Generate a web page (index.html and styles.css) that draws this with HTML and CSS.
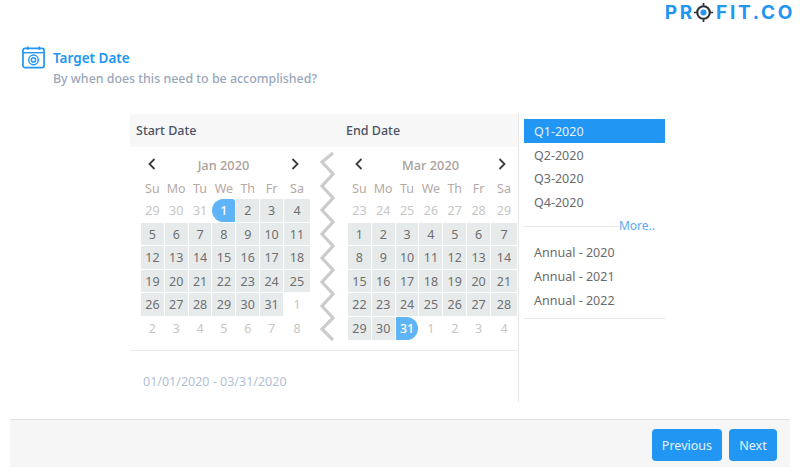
FILE: index.html
```html
<!DOCTYPE html>
<html>
<head>
  <meta charset="UTF-8">
  <title>Target Date</title>
  <link rel="stylesheet" href="styles.css">
</head>
<body>
  <div class="topbar">
    <div class="logo">
      <span>PR</span>
      <svg class="logo-o" viewBox="0 0 20 20" fill="none">
        <circle cx="10" cy="10" r="6.6" stroke="#2b2f36" stroke-width="2.2"/>
        <circle cx="10" cy="10" r="3.2" fill="#2196f3"/>
        <path d="M10 0v3M10 17v3M0 10h3M17 10h3" stroke="#2b2f36" stroke-width="1.8"/>
      </svg>
      <span>FIT.CO</span>
    </div>
  </div>

  <div class="heading">
    <svg class="heading-icon" viewBox="0 0 24 24" fill="none" stroke="#2196f3">
      <rect x="1" y="3" width="22" height="20" rx="2" stroke-width="1.8"/>
      <path d="M1 7.5h22" stroke-width="1.5"/>
      <path d="M6 1v3.5M18 1v3.5" stroke-width="1.8"/>
      <circle cx="12" cy="15" r="5" stroke-width="1.5"/>
      <circle cx="12" cy="15" r="2.2" stroke-width="1.5"/>
    </svg>
    <div>
      <h1 class="title">Target Date</h1>
      <p class="subtitle">By when does this need to be accomplished?</p>
    </div>
  </div>

  <div class="planner">
    <div class="range">
      <div class="range-head">
        <div class="range-label">Start Date</div>
        <div class="range-label">End Date</div>
      </div>
      <div class="calendars">
        <div class="calendar">
          <div class="month-nav">
            <svg class="chevron" viewBox="0 0 8 12"><path d="M6.5 1 1.5 6l5 5"/></svg>
            <span class="month-name">Jan 2020</span>
            <svg class="chevron" viewBox="0 0 8 12"><path d="M1.5 1l5 5-5 5"/></svg>
          </div>
          <div class="days">
            <div class="wd">Su</div><div class="wd">Mo</div><div class="wd">Tu</div><div class="wd">We</div><div class="wd">Th</div><div class="wd">Fr</div><div class="wd">Sa</div>
            <div class="day off">29</div><div class="day off">30</div><div class="day off">31</div><div class="day start">1</div><div class="day on">2</div><div class="day on">3</div><div class="day on">4</div>
            <div class="day on">5</div><div class="day on">6</div><div class="day on">7</div><div class="day on">8</div><div class="day on">9</div><div class="day on">10</div><div class="day on">11</div>
            <div class="day on">12</div><div class="day on">13</div><div class="day on">14</div><div class="day on">15</div><div class="day on">16</div><div class="day on">17</div><div class="day on">18</div>
            <div class="day on">19</div><div class="day on">20</div><div class="day on">21</div><div class="day on">22</div><div class="day on">23</div><div class="day on">24</div><div class="day on">25</div>
            <div class="day on">26</div><div class="day on">27</div><div class="day on">28</div><div class="day on">29</div><div class="day on">30</div><div class="day on">31</div><div class="day off">1</div>
            <div class="day off">2</div><div class="day off">3</div><div class="day off">4</div><div class="day off">5</div><div class="day off">6</div><div class="day off">7</div><div class="day off">8</div>
          </div>
        </div>

        <svg class="zigzag" viewBox="0 0 16 190" fill="none">
          <path d="M14 1 3 10l11 12L3 34l11 12L3 58l11 12L3 82l11 12L3 106l11 12L3 130l11 12L3 154l11 12L3 177l11 11"/>
        </svg>

        <div class="calendar">
          <div class="month-nav">
            <svg class="chevron" viewBox="0 0 8 12"><path d="M6.5 1 1.5 6l5 5"/></svg>
            <span class="month-name">Mar 2020</span>
            <svg class="chevron" viewBox="0 0 8 12"><path d="M1.5 1l5 5-5 5"/></svg>
          </div>
          <div class="days">
            <div class="wd">Su</div><div class="wd">Mo</div><div class="wd">Tu</div><div class="wd">We</div><div class="wd">Th</div><div class="wd">Fr</div><div class="wd">Sa</div>
            <div class="day off">23</div><div class="day off">24</div><div class="day off">25</div><div class="day off">26</div><div class="day off">27</div><div class="day off">28</div><div class="day off">29</div>
            <div class="day on">1</div><div class="day on">2</div><div class="day on">3</div><div class="day on">4</div><div class="day on">5</div><div class="day on">6</div><div class="day on">7</div>
            <div class="day on">8</div><div class="day on">9</div><div class="day on">10</div><div class="day on">11</div><div class="day on">12</div><div class="day on">13</div><div class="day on">14</div>
            <div class="day on">15</div><div class="day on">16</div><div class="day on">17</div><div class="day on">18</div><div class="day on">19</div><div class="day on">20</div><div class="day on">21</div>
            <div class="day on">22</div><div class="day on">23</div><div class="day on">24</div><div class="day on">25</div><div class="day on">26</div><div class="day on">27</div><div class="day on">28</div>
            <div class="day on">29</div><div class="day on">30</div><div class="day end">31</div><div class="day off">1</div><div class="day off">2</div><div class="day off">3</div><div class="day off">4</div>
          </div>
        </div>
      </div>
      <div class="range-value">01/01/2020 - 03/31/2020</div>
    </div>

    <div class="presets">
      <div class="preset active">Q1-2020</div>
      <div class="preset">Q2-2020</div>
      <div class="preset">Q3-2020</div>
      <div class="preset">Q4-2020</div>
      <div class="more"><span class="more-line"></span><span class="more-link">More..</span></div>
      <div class="preset">Annual - 2020</div>
      <div class="preset">Annual - 2021</div>
      <div class="preset">Annual - 2022</div>
      <div class="presets-end"></div>
    </div>
  </div>

  <div class="footer">
    <button class="btn">Previous</button>
    <button class="btn">Next</button>
  </div>
</body>
</html>
```

FILE: styles.css
```css
body {
  font-family: "Noto Sans", "Open Sans", sans-serif;
  margin: 0;
  height: 476px;
  overflow: hidden;
  background-color: white;
  color: #6f6f6f;
}

.topbar {
  height: 24px;
  display: flex;
  justify-content: flex-end;
  padding-right: 7px;
}

.logo {
  display: flex;
  align-items: center;
  height: 24px;
  font-family: "Inter", sans-serif;
  font-size: 19px;
  font-weight: 700;
  letter-spacing: 2.7px;
  margin-right: -2px;
  color: #2196f3;
}

.logo-o {
  width: 19px;
  height: 19px;
  margin: 0 3px 0 -1px;
}

.heading {
  display: flex;
  gap: 8px;
  margin: 21px 0 0 22px;
  height: 68px;
}

.heading-icon {
  width: 23px;
  height: 24px;
  flex: none;
}

.title {
  margin: 3px 0 0;
  font-size: 13.5px;
  line-height: 20px;
  font-weight: 600;
  color: #2196f3;
}

.subtitle {
  margin: 1px 0 0;
  font-size: 12.4px;
  line-height: 20px;
  font-weight: 500;
  color: #9aa7ba;
}

.planner {
  display: flex;
  margin-left: 130px;
  width: 535px;
  height: 289px;
}

.range {
  width: 388px;
  border-right: 1px solid #e6e6e6;
}

.range-head {
  display: flex;
  height: 33px;
  margin-top: 1px;
  align-items: center;
  background-color: #f7f7f7;
  padding-left: 6px;
  font-size: 12.5px;
  font-weight: 500;
  color: #4a5263;
}

.range-label {
  flex: none;
  width: 210px;
}

.calendars {
  display: flex;
  align-items: flex-start;
  height: 198px;
  padding-left: 11px;
  padding-top: 5px;
  border-bottom: 1px solid #e8e8e8;
}

.calendar {
  width: 169px;
}

.month-nav {
  display: flex;
  align-items: center;
  justify-content: space-between;
  height: 24px;
  padding: 0 11px 0 7px;
}

.month-name {
  margin-top: 2px;
  font-size: 12.8px;
  font-weight: 500;
  color: #aaa09b;
}

.chevron {
  width: 8px;
  height: 12px;
  fill: none;
  stroke: #3c3c3c;
  stroke-width: 1.8;
}

.days {
  display: grid;
  grid-template-columns: repeat(6, 22.83px) 1fr;
  grid-template-rows: 20px;
  grid-auto-rows: 22.6px;
  gap: 1px;
  margin-top: 2px;
  font-size: 12.5px;
  text-align: center;
}

.wd {
  line-height: 22px;
  color: #b5a9a5;
}

.day {
  line-height: 23px;
}

.day.on {
  background-color: #e7eaeb;
}

.day.off {
  color: #c6c6c6;
}

.day.start,
.day.end {
  background-color: #5fb4f8;
  color: white;
  font-weight: 500;
}

.day.start {
  border-radius: 12px 3px 0 12px;
}

.day.end {
  border-radius: 0 12px 12px 0;
}

.zigzag {
  width: 16px;
  height: 190px;
  margin: 0 13px 0 9px;
  stroke: #cccccc;
  stroke-width: 3.2;
}

.range-value {
  margin: 21px 0 0 13px;
  font-size: 12.5px;
  line-height: 20px;
  color: #b4c0d4;
}

.presets {
  width: 141px;
  margin-left: 5px;
  padding-top: 6px;
  font-size: 12.5px;
  color: #6b6b6b;
}

.preset {
  height: 23.6px;
  line-height: 25px;
  padding-left: 10px;
}

.preset.active {
  background-color: #2196f3;
  color: #e6f3fe;
}

.more {
  display: flex;
  align-items: center;
  height: 26px;
  margin-bottom: 1px;
}

.more-line {
  flex: 1;
  border-top: 1px solid #e8e8e8;
}

.more-link {
  padding: 0 10px 1px 0;
  font-size: 12px;
  color: #5aa9f5;
}

.presets-end {
  margin-top: 7px;
  border-top: 1px solid #e8e8e8;
}

.footer {
  display: flex;
  justify-content: flex-end;
  gap: 7px;
  margin: 17px 10px 0;
  border-top: 1px solid #e3e3e3;
  background-color: #f6f6f6;
  padding: 9px 13px 0 0;
  height: 38px;
}

.btn {
  height: 32px;
  min-width: 48px;
  padding: 1px 10px 0;
  border: none;
  border-radius: 4px;
  background-color: #2196f3;
  color: #e6f3fe;
  font-family: inherit;
  font-size: 12.5px;
}
```
